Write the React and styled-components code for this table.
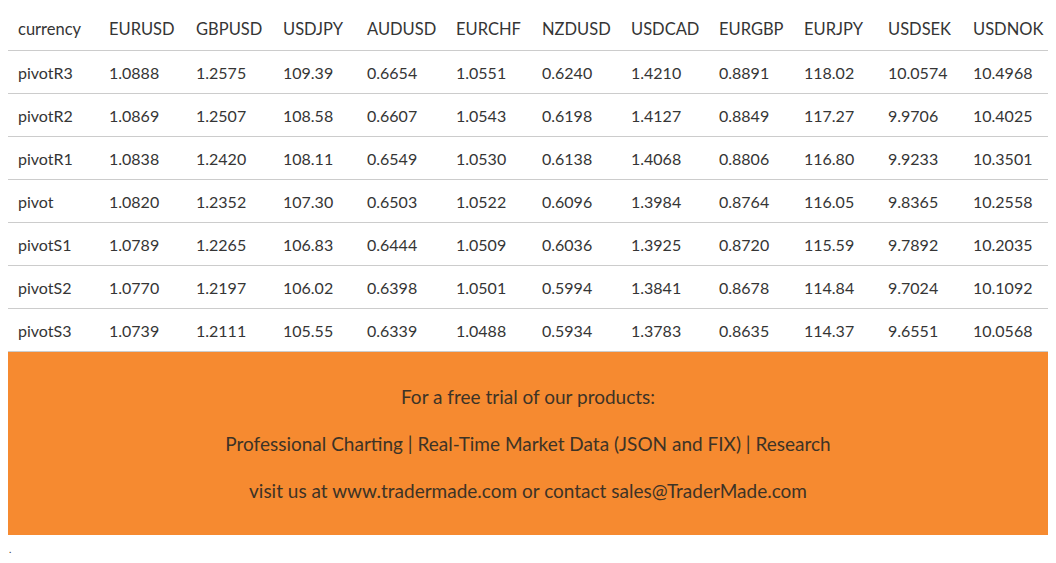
import React from "react";
import styled, { createGlobalStyle } from "styled-components";

const Global = createGlobalStyle`
  body {
    margin: 8px;
    background: #ffffff;
    font-family: "Lato", "Open Sans", sans-serif;
    color: #333333;
  }
`;

const Page = styled.div`
  display: flex;
  flex-direction: column;
  width: 1040px;
`;

const Table = styled.table`
  border-collapse: collapse;
  table-layout: fixed;
  width: 1045px;
  font-size: 16px;
`;

const Cell = styled.td`
  height: 42px;
  padding: 0 0 0 10px;
  text-align: left;
  font-weight: 400;
  color: #353535;
  border-bottom: 1px solid #cccccc;
  white-space: nowrap;
`;

const HeadCell = styled(Cell).attrs({ as: "th" })`
  font-size: 16.5px;
`;

const Promo = styled.div`
  background: #f68a30;
  display: flex;
  flex-direction: column;
  align-items: center;
  gap: 18px;
  padding: 30px 0;
  font-size: 19px;
  line-height: 29px;
  color: #3d3326;
`;

const PromoLine = styled.p`
  margin: 0;
`;

const Dot = styled.p`
  margin: 8px 0 0 1px;
  font-size: 10px;
  line-height: 12px;
  color: #333;
`;

const widths = [91, 87, 87, 84, 89, 86, 89, 88, 85, 84, 85, 90];
const headers = ["currency", "EURUSD", "GBPUSD", "USDJPY", "AUDUSD", "EURCHF", "NZDUSD", "USDCAD", "EURGBP", "EURJPY", "USDSEK", "USDNOK"];
const rows = [
  ["pivotR3", "1.0888", "1.2575", "109.39", "0.6654", "1.0551", "0.6240", "1.4210", "0.8891", "118.02", "10.0574", "10.4968"],
  ["pivotR2", "1.0869", "1.2507", "108.58", "0.6607", "1.0543", "0.6198", "1.4127", "0.8849", "117.27", "9.9706", "10.4025"],
  ["pivotR1", "1.0838", "1.2420", "108.11", "0.6549", "1.0530", "0.6138", "1.4068", "0.8806", "116.80", "9.9233", "10.3501"],
  ["pivot", "1.0820", "1.2352", "107.30", "0.6503", "1.0522", "0.6096", "1.3984", "0.8764", "116.05", "9.8365", "10.2558"],
  ["pivotS1", "1.0789", "1.2265", "106.83", "0.6444", "1.0509", "0.6036", "1.3925", "0.8720", "115.59", "9.7892", "10.2035"],
  ["pivotS2", "1.0770", "1.2197", "106.02", "0.6398", "1.0501", "0.5994", "1.3841", "0.8678", "114.84", "9.7024", "10.1092"],
  ["pivotS3", "1.0739", "1.2111", "105.55", "0.6339", "1.0488", "0.5934", "1.3783", "0.8635", "114.37", "9.6551", "10.0568"],
];

export default function App() {
  return (
    <>
      <Global />
      <Page>
        <Table>
          <colgroup>
            {widths.map((w, i) => (
              <col key={i} style={{ width: w }} />
            ))}
          </colgroup>
          <thead>
            <tr>
              {headers.map((h) => (
                <HeadCell key={h}>{h}</HeadCell>
              ))}
            </tr>
          </thead>
          <tbody>
            {rows.map((r) => (
              <tr key={r[0]}>
                {r.map((c, i) => (
                  <Cell key={i}>{c}</Cell>
                ))}
              </tr>
            ))}
          </tbody>
        </Table>
        <Promo>
          <PromoLine>For a free trial of our products:</PromoLine>
          <PromoLine>Professional Charting | Real-Time Market Data (JSON and FIX) | Research</PromoLine>
          <PromoLine>visit us at www.tradermade.com or contact sales@TraderMade.com</PromoLine>
        </Promo>
        <Dot>.</Dot>
      </Page>
    </>
  );
}
